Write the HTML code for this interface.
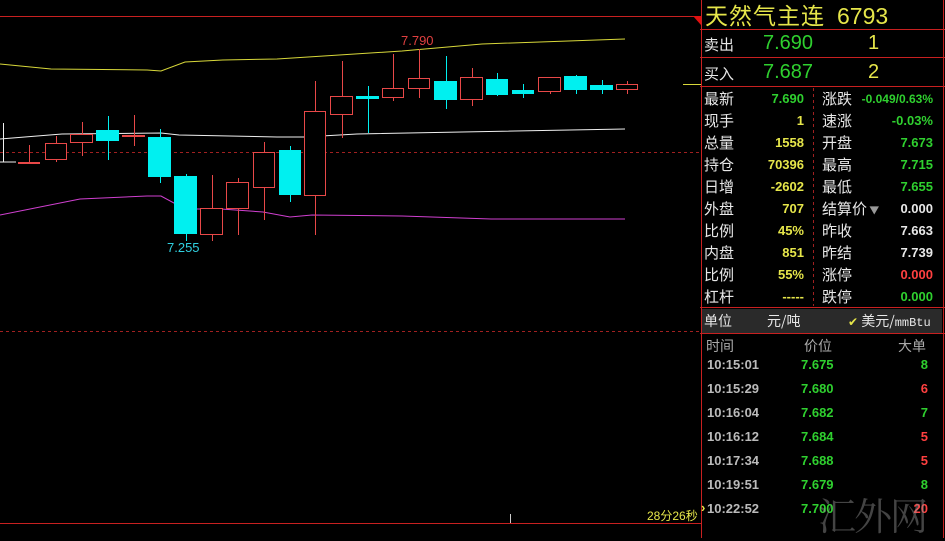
<!DOCTYPE html>
<html><head><meta charset="utf-8">
<style>
*{margin:0;padding:0;box-sizing:border-box}
body{width:945px;height:538px;background:#000;overflow:hidden;position:relative;font-family:"Liberation Sans","Noto Sans CJK SC",sans-serif}
.t{position:absolute;white-space:nowrap}
.cn{font-family:"Noto Sans CJK SC","WenQuanYi Zen Hei",sans-serif}
.g{color:#2fd02f}.y{color:#e6e64a}.w{color:#e8e8e8}.r{color:#ff4040}.gr{color:#c0c0c0}
.lab{color:#e8e8e8;font-size:15px}
.num{font-size:13px;font-weight:bold;text-align:right}
</style></head><body>
<svg width="945" height="538" style="position:absolute;left:0;top:0">
<line x1="0" y1="16.5" x2="701" y2="16.5" stroke="#c82020" stroke-width="1"/>
<polygon points="693,16 701,16 701,25" fill="#e01010"/>
<line x1="701.5" y1="0" x2="701.5" y2="538" stroke="#c82020"/>
<line x1="0" y1="523.5" x2="701" y2="523.5" stroke="#c82020"/>
<line x1="0" y1="152.5" x2="701" y2="152.5" stroke="#a02020" stroke-dasharray="3,3"/>
<line x1="0" y1="331.5" x2="701" y2="331.5" stroke="#a02020" stroke-dasharray="3,3"/>
<line x1="510.5" y1="514" x2="510.5" y2="523" stroke="#ccc"/>
<polyline fill="none" stroke="#d8d83a" points="0,64 51,69 147,70 161,71 185,62 223,60 277,59 402,51 482,44 625,39"/>
<line x1="683" y1="84.5" x2="701" y2="84.5" stroke="#d8d83a"/>
<polyline fill="none" stroke="#f0f0f0" points="0,139 62,134 161,133 179,135 277,137 304,137 357,134 625,129"/>
<polyline fill="none" stroke="#f0f0f0" points="3.5,123 3.5,162 0,162 16,162"/>
<polyline fill="none" stroke="#d040d0" points="0,215 80,199 147,196 161,196 185,209 221,209 263,212 290,217 312,215 402,216 491,219 625,219"/>
<g id="c"></g>
<line x1="700" y1="29.5" x2="945" y2="29.5" stroke="#c82020"/>
<line x1="700" y1="57.5" x2="945" y2="57.5" stroke="#c82020"/>
<line x1="700" y1="86.5" x2="945" y2="86.5" stroke="#c82020"/>
<line x1="943.5" y1="0" x2="943.5" y2="538" stroke="#c82020"/>
<line x1="813.5" y1="88" x2="813.5" y2="306" stroke="#a02020" stroke-dasharray="3,3"/>
<line x1="700" y1="307.5" x2="945" y2="307.5" stroke="#c82020"/>
<line x1="700" y1="333.5" x2="945" y2="333.5" stroke="#c82020"/>
<rect x="702" y="309" width="240" height="24" fill="#2a2a2a"/>
</svg>
<script>
var d=[[18,40,162,162,145,162,'r'],[45,67,143,159,136,162,'r'],[70,93,134,142,122,156,'r'],[96,119,130,141,116,160,'c'],[122,145,135,137,115,146,'rf'],[148,171,137,177,129,183,'c'],[174,197,176,234,174,241,'c'],[200,223,208,234,175,241,'r'],[226,249,182,208,178,235,'r'],[253,275,152,187,142,220,'r'],[279,301,150,195,146,202,'c'],[304,326,111,195,81,235,'r'],[330,353,96,114,61,138,'r'],[356,379,96,99,86,133,'c'],[382,404,88,97,54,101,'r'],[408,430,78,88,49,98,'r'],[434,457,81,100,56,109,'c'],[460,483,77,99,68,106,'r'],[486,508,79,95,73,96,'c'],[512,534,90,94,84,98,'c'],[538,561,77,91,77,94,'r'],[564,587,76,90,75,94,'c'],[590,613,85,90,80,94,'c'],[616,638,84,89,81,94,'r']];
var s='';d.forEach(function(a){var cx=Math.round((a[0]+a[1])/2)+0.5;var col=a[6]=='c'?'#00f0f0':'#e84848';
s+='<line x1="'+cx+'" y1="'+a[4]+'" x2="'+cx+'" y2="'+a[5]+'" stroke="'+col+'"/>';
if(a[6]=='c'||a[6]=='rf'||a[3]-a[2]<3)s+='<rect x="'+a[0]+'" y="'+a[2]+'" width="'+(a[1]-a[0])+'" height="'+Math.max(2,a[3]-a[2])+'" fill="'+col+'"/>';
else s+='<rect x="'+(a[0]+.5)+'" y="'+(a[2]+.5)+'" width="'+(a[1]-a[0]-1)+'" height="'+(a[3]-a[2])+'" fill="#000" stroke="'+col+'"/>';});
document.getElementById('c').innerHTML=s;
</script>
<div class="t" style="left:401px;top:33px;font-size:13px;color:#e04040">7.790</div>
<div class="t" style="left:167px;top:240px;font-size:13px;color:#30d0e0">7.255</div>
<div class="t y" style="left:647px;top:507px;font-size:12px">28分26秒</div>

<div class="t y cn" style="left:705px;top:-1px;font-size:23px;line-height:30px;letter-spacing:1px">天然气主连<span style="font-family:'Liberation Sans';margin-left:12px;letter-spacing:0">6793</span></div>
<div class="t lab cn" style="left:704px;top:34px">卖出</div>
<div class="t g" style="left:763px;top:32px;font-size:20px">7.690</div>
<div class="t y" style="left:868px;top:32px;font-size:20px">1</div>
<div class="t lab cn" style="left:704px;top:63px">买入</div>
<div class="t g" style="left:763px;top:61px;font-size:20px">7.687</div>
<div class="t y" style="left:868px;top:61px;font-size:20px">2</div>

<div style="position:absolute;left:704px;top:88px;width:100px">
<div style="display:flex;justify-content:space-between;height:22px;line-height:22px"><span class="lab cn">最新</span><span class="num g">7.690</span></div>
<div style="display:flex;justify-content:space-between;height:22px;line-height:22px"><span class="lab cn">现手</span><span class="num y">1</span></div>
<div style="display:flex;justify-content:space-between;height:22px;line-height:22px"><span class="lab cn">总量</span><span class="num y">1558</span></div>
<div style="display:flex;justify-content:space-between;height:22px;line-height:22px"><span class="lab cn">持仓</span><span class="num y">70396</span></div>
<div style="display:flex;justify-content:space-between;height:22px;line-height:22px"><span class="lab cn">日增</span><span class="num y">-2602</span></div>
<div style="display:flex;justify-content:space-between;height:22px;line-height:22px"><span class="lab cn">外盘</span><span class="num y">707</span></div>
<div style="display:flex;justify-content:space-between;height:22px;line-height:22px"><span class="lab cn">比例</span><span class="num y">45%</span></div>
<div style="display:flex;justify-content:space-between;height:22px;line-height:22px"><span class="lab cn">内盘</span><span class="num y">851</span></div>
<div style="display:flex;justify-content:space-between;height:22px;line-height:22px"><span class="lab cn">比例</span><span class="num y">55%</span></div>
<div style="display:flex;justify-content:space-between;height:22px;line-height:22px"><span class="lab cn">杠杆</span><span class="num y">-----</span></div>
</div>
<div style="position:absolute;left:822px;top:88px;width:111px">
<div style="display:flex;justify-content:space-between;height:22px;line-height:22px"><span class="lab cn">涨跌</span><span class="num g" style="font-size:12px">-0.049/0.63%</span></div>
<div style="display:flex;justify-content:space-between;height:22px;line-height:22px"><span class="lab cn">速涨</span><span class="num g">-0.03%</span></div>
<div style="display:flex;justify-content:space-between;height:22px;line-height:22px"><span class="lab cn">开盘</span><span class="num g">7.673</span></div>
<div style="display:flex;justify-content:space-between;height:22px;line-height:22px"><span class="lab cn">最高</span><span class="num g">7.715</span></div>
<div style="display:flex;justify-content:space-between;height:22px;line-height:22px"><span class="lab cn">最低</span><span class="num g">7.655</span></div>
<div style="display:flex;justify-content:space-between;height:22px;line-height:22px"><span class="lab cn">结算价<span style="color:#999;font-size:10px"> ▼</span></span><span class="num w">0.000</span></div>
<div style="display:flex;justify-content:space-between;height:22px;line-height:22px"><span class="lab cn">昨收</span><span class="num w">7.663</span></div>
<div style="display:flex;justify-content:space-between;height:22px;line-height:22px"><span class="lab cn">昨结</span><span class="num w">7.739</span></div>
<div style="display:flex;justify-content:space-between;height:22px;line-height:22px"><span class="lab cn">涨停</span><span class="num r">0.000</span></div>
<div style="display:flex;justify-content:space-between;height:22px;line-height:22px"><span class="lab cn">跌停</span><span class="num g">0.000</span></div>
</div>
<div class="t lab cn" style="left:704px;top:311px;font-size:14px">单位</div>
<div class="t lab cn" style="left:767px;top:311px;font-size:14px">元/吨</div>
<div class="t lab cn" style="left:848px;top:311px;font-size:14px"><span class="y" style="font-size:12px">✔</span> 美元/<span style="font-family:'Liberation Mono';font-size:12px">mmBtu</span></div>

<div class="t cn" style="left:706px;top:336px;font-size:14px;color:#aaa">时间</div>
<div class="t cn" style="left:804px;top:336px;font-size:14px;color:#aaa">价位</div>
<div class="t cn" style="left:898px;top:336px;font-size:14px;color:#aaa">大单</div>
<div style="position:absolute;left:707px;top:355px;width:221px;font-size:13px;font-weight:bold">
<div style="display:flex;height:24px;line-height:20px"><span style="width:94px;color:#bbb">10:15:01</span><span class="g" style="width:100px">7.675</span><span class="g" style="flex:1;text-align:right">8</span></div>
<div style="display:flex;height:24px;line-height:20px"><span style="width:94px;color:#bbb">10:15:29</span><span class="g" style="width:100px">7.680</span><span class="r" style="flex:1;text-align:right">6</span></div>
<div style="display:flex;height:24px;line-height:20px"><span style="width:94px;color:#bbb">10:16:04</span><span class="g" style="width:100px">7.682</span><span class="g" style="flex:1;text-align:right">7</span></div>
<div style="display:flex;height:24px;line-height:20px"><span style="width:94px;color:#bbb">10:16:12</span><span class="g" style="width:100px">7.684</span><span class="r" style="flex:1;text-align:right">5</span></div>
<div style="display:flex;height:24px;line-height:20px"><span style="width:94px;color:#bbb">10:17:34</span><span class="g" style="width:100px">7.688</span><span class="r" style="flex:1;text-align:right">5</span></div>
<div style="display:flex;height:24px;line-height:20px"><span style="width:94px;color:#bbb">10:19:51</span><span class="g" style="width:100px">7.679</span><span class="g" style="flex:1;text-align:right">8</span></div>
<div style="display:flex;height:24px;line-height:20px"><span style="width:94px;color:#bbb">10:22:52</span><span class="g" style="width:100px">7.700</span><span class="r" style="flex:1;text-align:right">20</span></div>
</div>
<div class="t y" style="left:701px;top:500px;font-size:13px;font-weight:bold">›</div>
<div class="t" style="left:818px;top:486px;font-size:38px;color:rgba(150,150,150,0.45);font-family:'Noto Serif CJK SC',serif;letter-spacing:-2px">汇外网</div>
</body></html>
